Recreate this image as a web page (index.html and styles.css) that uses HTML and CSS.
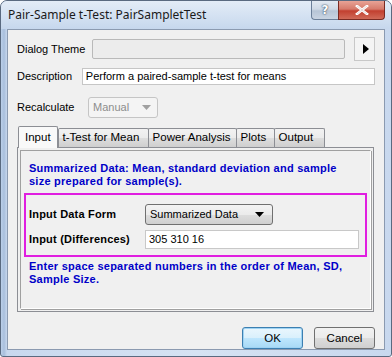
FILE: index.html
```html
<!DOCTYPE html>
<html>
<head>
<meta charset="utf-8">
<link rel="stylesheet" href="styles.css">
</head>
<body>
<div class="window">
  <div class="titlebar">
    <div class="title">Pair-Sample t-Test: PairSampletTest</div>
    <div class="caption-btns">
      <div class="cbtn help">?</div>
      <div class="cbtn close">
        <svg width="14" height="10" viewBox="0 0 14 10"><path d="M2 1 L12 9 M12 1 L2 9" stroke="#fff" stroke-width="2.6" stroke-linecap="square"/><path d="M2 1 L12 9 M12 1 L2 9" stroke="#6b2a2a" stroke-width="0.6" opacity="0.3"/></svg>
      </div>
    </div>
  </div>
  <div class="client">
    <div class="row theme-row">
      <span class="lbl">Dialog Theme</span>
      <div class="theme-box"></div>
      <div class="arrow-btn"><svg width="8" height="12" viewBox="0 0 8 12"><path d="M1 1 L7 6 L1 11 Z" fill="#000"/></svg></div>
    </div>
    <div class="row desc-row">
      <span class="lbl">Description</span>
      <div class="desc-box">Perform a paired-sample t-test for means</div>
    </div>
    <div class="row recalc-row">
      <span class="lbl">Recalculate</span>
      <div class="combo disabled"><span>Manual</span><svg width="9" height="5" viewBox="0 0 9 5"><path d="M0 0 L9 0 L4.5 5 Z" fill="#a0a0a0"/></svg></div>
    </div>
    <div class="tabs">
      <div class="tab active">Input</div>
      <div class="tab">t-Test for Mean</div>
      <div class="tab">Power Analysis</div>
      <div class="tab">Plots</div>
      <div class="tab">Output</div>
    </div>
    <div class="panel">
      <div class="panel-inner">
        <p class="note">Summarized Data: Mean, standard deviation and sample<br>size prepared for sample(s).</p>
        <div class="hilite">
          <div class="frow">
            <span class="flbl">Input Data Form</span>
            <div class="combo sel"><span>Summarized Data</span><svg width="9" height="5" viewBox="0 0 9 5"><path d="M0 0 L9 0 L4.5 5 Z" fill="#000"/></svg></div>
          </div>
          <div class="frow">
            <span class="flbl">Input (Differences)</span>
            <div class="inp">305 310 16</div>
          </div>
        </div>
        <p class="note">Enter space separated numbers in the order of Mean, SD,<br>Sample Size.</p>
      </div>
    </div>
    <div class="buttons">
      <div class="btn default">OK</div>
      <div class="btn">Cancel</div>
    </div>
  </div>
</div>
</body>
</html>
```

FILE: styles.css
```css
* { box-sizing: border-box; }
html, body { margin: 0; padding: 0; }
body { width: 392px; height: 357px; background: #fff; overflow: hidden; }

.window {
  width: 392px;
  height: 357px;
  border: 1px solid #5a6a80;
  border-radius: 7px 7px 3px 3px;
  background: linear-gradient(90deg, #bcd0ea 0px, #a9bfdc 3px, #c8d8ee 6px, #d6e3f3 50%, #c8d8ee 100%);
  display: flex;
  flex-direction: column;
  font-family: "Liberation Sans", Arial, sans-serif;
  font-size: 11px;
  color: #000;
}

.titlebar {
  height: 28px;
  display: flex;
  justify-content: space-between;
  align-items: flex-start;
  padding-left: 7px;
  background: linear-gradient(180deg, #e3ecf7 0%, #d2e0f1 60%, #c6d7ed 100%);
  border-radius: 6px 6px 0 0;
}
.title {
  font-family: "Noto Sans", "Open Sans", sans-serif;
  font-size: 12px;
  line-height: 27px;
  color: #1a1a1a;
}
.caption-btns { display: flex; margin-right: 6px; }
.cbtn {
  height: 19px;
  display: flex;
  align-items: center;
  justify-content: center;
  border: 1px solid #6b7f99;
  border-top: none;
}
.help {
  width: 27px;
  border-radius: 0 0 0 4px;
  background: linear-gradient(180deg, #e2e9f2 0%, #cfd9e6 45%, #b7c5d6 55%, #c9d4e2 100%);
  color: #fff;
  font-family: "DejaVu Sans", sans-serif;
  font-weight: bold;
  font-size: 12px;
  text-shadow: 0 0 2px #3a4a60, 0 0 1px #3a4a60;
  border-right: none;
}
.close {
  width: 47px;
  border-radius: 0 0 4px 0;
  border-color: #7a2a22;
  background: linear-gradient(180deg, #e8a396 0%, #d67a6b 45%, #c24030 55%, #d06a58 100%);
}

.client {
  flex: 1;
  margin: 0 6px 6px 6px;
  background: #f0f0f0;
  border: 1px solid #8b9ab0;
  display: flex;
  flex-direction: column;
  padding: 0 9px 0 9px;
}

.row { display: flex; align-items: center; }
.lbl { white-space: nowrap; }

.theme-row { margin-top: 7px; height: 24px; }
.theme-row .lbl { width: 75px; }
.theme-box {
  width: 255px;
  height: 20px;
  border: 1px solid #b9b9b9;
  background: #ececec;
  border-radius: 2px;
}
.arrow-btn {
  margin-left: 9px;
  width: 21px;
  height: 24px;
  border: 1px solid #c8c8c8;
  background: #f4f4f4;
  display: flex;
  align-items: center;
  justify-content: center;
  padding-left: 2px;
}

.desc-row { margin-top: 6px; height: 18px; }
.desc-row .lbl { width: 65px; }
.desc-box {
  width: 294px;
  height: 17px;
  border: 1px solid #c6c6c6;
  background: #fff;
  line-height: 15px;
  padding-left: 3px;
}

.recalc-row { margin-top: 11px; height: 22px; }
.recalc-row .lbl { width: 71px; }

.combo {
  display: flex;
  align-items: center;
  justify-content: space-between;
  border: 1px solid #adadad;
  border-radius: 3px;
  padding: 0 6px 0 4px;
}
.combo.disabled {
  width: 70px;
  height: 21px;
  border-color: #c5c5c5;
  color: #8d8d8d;
  background: #f4f4f4;
}
.combo.sel {
  width: 128px;
  height: 21px;
  border-color: #707070;
  background: linear-gradient(180deg, #f3f3f3 0%, #ebebeb 50%, #dddddd 51%, #cfcfcf 100%);
  padding-right: 8px;
}

.tabs { display: flex; margin-top: 8px; height: 21px; align-items: flex-end; padding-left: 1px; }
.tab {
  height: 19px;
  padding: 0 4px;
  line-height: 17px;
  font-size: 11.5px;
  border: 1px solid #8c8e94;
  border-bottom: none;
  margin-right: -1px;
  background: linear-gradient(180deg, #f2f2f2 0%, #ebebeb 50%, #dddddd 51%, #cfcfcf 100%);
  border-radius: 2px 2px 0 0;
}
.tab.active {
  height: 21px;
  line-height: 20px;
  background: #f9f9f9;
  padding: 0 6px;
  margin-right: 0;
  position: relative;
  z-index: 1;
  margin-bottom: -1px;
  height: 22px;
}
.tab:nth-child(2) { width: 91px; }
.tab:nth-child(3) { width: 89px; }
.tab:nth-child(4) { width: 39px; }
.tab:nth-child(5) { width: 51px; }

.panel {
  width: 357px;
  height: 165px;
  border: 1px solid #8c8e94;
  padding: 2px;
}
.panel-inner {
  height: 100%;
  border: 1px solid #a0a0a0;
  border-right-color: #fff;
  border-bottom-color: #fff;
  box-shadow: 1px 1px 0 #a0a0a0;
  padding: 11px 6px 0 8px;
}
.note {
  margin: 0;
  color: #0000c8;
  font-weight: bold;
  font-size: 11px;
  line-height: 13px;
  letter-spacing: 0.25px;
}
.hilite {
  margin: 5px 0 3px -5px;
  width: 343px;
  height: 64px;
  border: 2px solid #e01ee0;
  padding: 8px 0 0 3px;
}
.frow { display: flex; align-items: center; height: 22px; margin-bottom: 3px; }
.flbl { width: 116px; font-weight: bold; letter-spacing: 0.2px; }
.inp {
  width: 214px;
  height: 19px;
  border: 1px solid #c8c8c8;
  background: #fff;
  line-height: 17px;
  padding-left: 3px;
}

.buttons {
  margin-top: 15px;
  display: flex;
  justify-content: flex-end;
  gap: 11px;
  padding-right: 0;
}
.btn {
  width: 61px;
  height: 22px;
  border: 1px solid #707070;
  border-radius: 3px;
  text-align: center;
  line-height: 20px;
  font-size: 11.5px;
  background: linear-gradient(180deg, #f2f2f2 0%, #ebebeb 50%, #dddddd 51%, #cfcfcf 100%);
}
.btn.default {
  border-color: #3c7fb1;
  background: linear-gradient(180deg, #eaf6fd 0%, #d9f0fc 50%, #bee6fd 51%, #a7d9f5 100%);
  box-shadow: inset 0 0 0 1px #9fd3f3;
}
```
